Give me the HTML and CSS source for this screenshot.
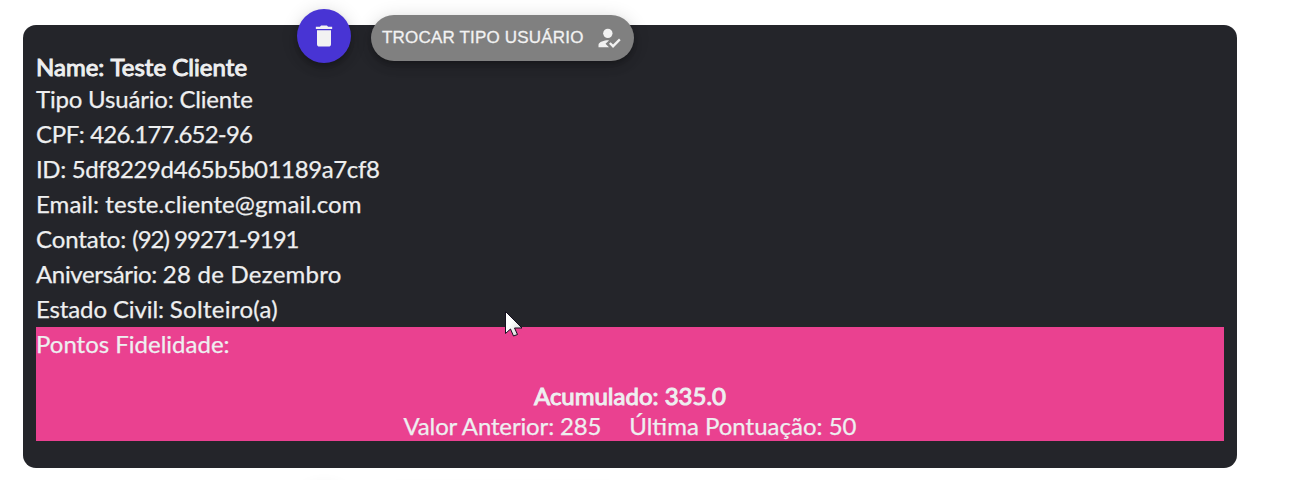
FILE: index.html
```
<!DOCTYPE html>
<html lang="pt-BR">
<head>
<meta charset="utf-8">
<title>Clientes</title>
<link rel="stylesheet" href="styles.css">
</head>
<body>
<main class="list">
  <article class="card">
    <div class="actions">
      <button class="fab" aria-label="Excluir"><svg class="icon" viewBox="0 0 24 24"><path d="M6 19c0 1.100.9 2 2 2h8c1.100 0 2-.9 2-2V7H6v12zM19 4h-3.500l-1-1h-5l-1 1H5v2h14V4z"/></svg></button>
      <button class="pill"><span class="pill-text">TROCAR TIPO USUÁRIO</span><svg class="icon" viewBox="0 0 24 24"><path d="M9 17l3-2.940c-.39-.04-.68-.06-1-.06-2.670 0-8 1.340-8 4v2h9l-3-3z"/><circle cx="11" cy="8" r="4"/><path d="M15.470 20.500L12 17l1.400-1.410 2.070 2.080 5.130-5.170 1.400 1.410z"/></svg></button>
    </div>
    <p class="line name">Name: <span class="fit-name">Teste Cliente</span></p>
    <p class="line"><span class="fit-type">Tipo Usuário: Cliente</span></p>
    <p class="line"><span class="fit-label">CPF: </span><span class="fit-cpf">426.177.652-96</span></p>
    <p class="line"><span class="fit-label">ID: </span><span class="fit-id">5df8229d465b5b01189a7cf8</span></p>
    <p class="line"><span class="fit-email">Email: teste.cliente@gmail.com</span></p>
    <p class="line"><span class="fit-contact">Contato: </span><span class="fit-phone">(92) 99271-9191</span></p>
    <p class="line"><span class="fit-label">Aniversário: </span><span class="fit-birth">28 de Dezembro</span></p>
    <p class="line"><span class="fit-contact">Estado Civil: </span><span class="fit-civil">Solteiro(a)</span></p>
    <section class="points">
      <p class="line">Pontos Fidelidade:</p>
      <p class="total">Acumulado: 335.0</p>
      <p class="history"><span class="fit-prev">Valor Anterior: 285</span><span>Última Pontuação: 50</span></p>
    </section>
  </article>
  <div class="next"><span class="next-fab"></span><span class="next-pill"></span></div>
</main>
<svg class="cursor" viewBox="0 0 20 30"><defs><linearGradient id="shade" x2="1" y2="1"><stop offset=".4" stop-color="#fff"/><stop offset="1" stop-color="#ccc"/></linearGradient></defs><path d="M1.500 1.500V23.500L6.500 19L9.500 26L13.500 24.500L10.500 18H18Z" fill="url(#shade)" stroke="#15101f"/></svg>
</body>
</html>
```
FILE: styles.css
```
* { box-sizing: border-box; }
body { margin: 0; height: 480px; overflow: hidden; background: #fff; color: #eeeff0; font-family: Lato, "Liberation Sans", sans-serif; }
p { margin: 0; }
.list { height: 480px; overflow: hidden; padding: 25px 70px 0 23px; }
.card { position: relative; height: 443px; padding: 27px 13px 0; border-radius: 13px; background: #24252a; font-size: 24px; -webkit-text-stroke: .25px; }
.line { height: 35px; line-height: 33px; white-space: nowrap; }
.name { height: 30px; line-height: 30px; -webkit-text-stroke: 1px; }
.points { height: 114px; background: #ea4190; }
.total { padding-top: 18px; height: 50px; line-height: 32px; text-align: center; -webkit-text-stroke: 1px; }
.history { display: flex; justify-content: center; gap: 28px; height: 29px; line-height: 27px; white-space: nowrap; }
.fit-name { letter-spacing: .03px; }
.fit-type { letter-spacing: -.19px; }
.fit-label { letter-spacing: -.35px; }
.fit-cpf { letter-spacing: -.82px; }
.fit-id { letter-spacing: -.37px; }
.fit-email { letter-spacing: .08px; }
.fit-contact { letter-spacing: -.12px; }
.fit-phone { letter-spacing: -.98px; }
.fit-birth { letter-spacing: .25px; }
.fit-civil { letter-spacing: .3px; }
.fit-prev { letter-spacing: -.15px; }
.actions { position: absolute; top: -16px; left: 274px; display: flex; align-items: center; gap: 20px; -webkit-text-stroke: 0; }
.fab, .pill { display: flex; align-items: center; border: 0; color: #f2f2f2; box-shadow: 0 3px 5px -1px rgba(0,0,0,.2), 0 6px 10px rgba(0,0,0,.14), 0 1px 18px rgba(0,0,0,.12); }
.fab { justify-content: center; width: 54px; height: 54px; padding: 0; border-radius: 50%; background: #4834d4; }
.pill { width: 263px; height: 46px; margin-top: 4px; padding: 0 11px; justify-content: space-between; border-radius: 23px; background: #808080; font: 17px "Liberation Sans", sans-serif; white-space: nowrap; }
.pill-text { letter-spacing: .19px; -webkit-text-stroke: .3px; }
.icon { width: 28px; height: 28px; fill: currentColor; }
.next { display: flex; gap: 20px; padding: 20px 0 0 274px; }
.next-fab, .next-pill { box-shadow: 0 1px 18px rgba(0,0,0,.12); }
.next-fab { width: 54px; height: 54px; border-radius: 50%; }
.next-pill { width: 263px; height: 46px; margin-top: 6px; border-radius: 23px; }
.cursor { position: absolute; left: 504px; top: 310px; width: 20px; height: 30px; }
```
